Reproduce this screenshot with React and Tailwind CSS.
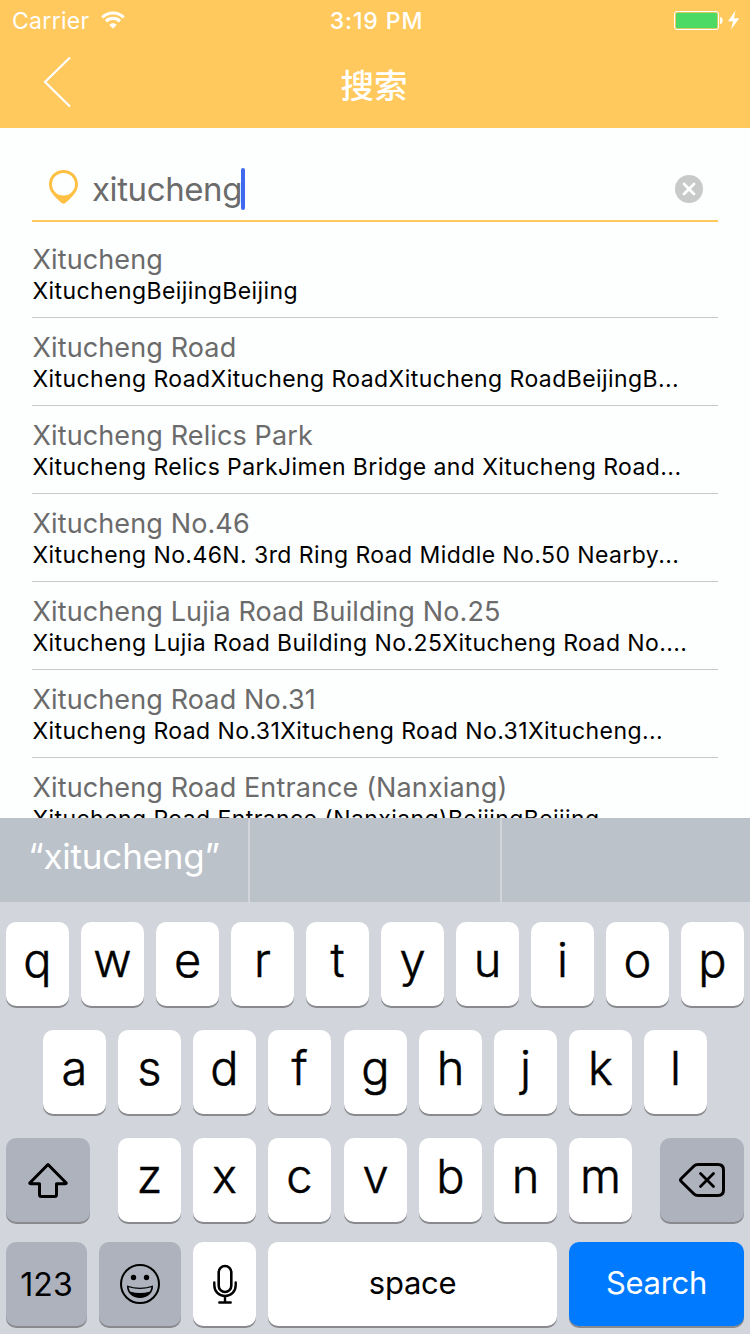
import React from "react";

const results = [
  { title: "Xitucheng", detail: "XituchengBeijingBeijing" },
  { title: "Xitucheng Road", detail: "Xitucheng RoadXitucheng RoadXitucheng RoadBeijingB..." },
  { title: "Xitucheng Relics Park", detail: "Xitucheng Relics ParkJimen Bridge and Xitucheng Road..." },
  { title: "Xitucheng No.46", detail: "Xitucheng No.46N. 3rd Ring Road Middle No.50 Nearby..." },
  { title: "Xitucheng Lujia Road Building No.25", detail: "Xitucheng Lujia Road Building No.25Xitucheng Road No...." },
  { title: "Xitucheng Road No.31", detail: "Xitucheng Road No.31Xitucheng Road No.31Xitucheng..." },
  { title: "Xitucheng Road Entrance (Nanxiang)", detail: "Xitucheng Road Entrance (Nanxiang)BeijingBeijing" },
];

const keyBase =
  "flex h-[84px] shrink-0 items-center justify-center rounded-[10px] shadow-[0_2px_0_#898a8d]";

function LetterKey({ children, className = "" }) {
  return (
    <button className={`${keyBase} w-[63px] bg-white pb-[9px] text-[47px] leading-none font-light [-webkit-text-stroke:0.5px_black] ${className}`}>
      {children}
    </button>
  );
}

function StatusBar() {
  return (
    <div className="grid h-10 grid-cols-3 items-center pr-[9px] pl-3 text-white">
      <div className="flex items-center">
        <span className="w-[78px] pt-[2px] text-[23px] leading-none tracking-[0.3px]">Carrier</span>
        <svg className="ml-[11px]" width="24" height="18" viewBox="0 0 25 18" fill="none" stroke="white" strokeWidth="3.3">
          <path d="M1.3 6.2C7.6.2 17.4.2 23.7 6.2" />
          <path d="M5.2 10.3C9.3 6.4 15.7 6.4 19.8 10.3" />
          <path d="M12.5 18 8.6 14C10.8 11.8 14.2 11.8 16.4 14Z" fill="white" stroke="none" />
        </svg>
      </div>
      <span className="pt-[2px] text-center text-[23px] leading-none font-[550] tracking-[0.9px]">3:19 PM</span>
      <svg className="justify-self-end" width="68" height="20" viewBox="0 0 68 20">
        <rect x="1.5" y="1.5" width="44" height="18" rx="2.5" fill="none" stroke="white" />
        <rect x="2.9" y="2.8" width="41.4" height="15.4" rx="1.5" fill="#4cd964" />
        <path d="M47 7C50.5 7 50.5 14 47 14Z" fill="white" />
        <path d="M62.5.5 55 11.3H60L58 19.5 66.3 8.2H61Z" fill="white" />
      </svg>
    </div>
  );
}

function Header() {
  return (
    <header className="h-32 shrink-0 bg-[#ffc95d]">
      <StatusBar />
      <div className="grid h-[84px] grid-cols-3 items-center text-white">
        <svg className="ml-[42px]" width="30" height="54" viewBox="0 0 30 54" fill="none" stroke="white" strokeWidth="2.2">
          <path d="M28 2.5 3 27 28 51.5" />
        </svg>
        <h1 className="pt-[3px] pr-[2px] text-center font-['Noto_Sans_CJK_SC',sans-serif] text-[33.5px] leading-none font-medium">搜索</h1>
      </div>
    </header>
  );
}

function SearchField() {
  return (
    <div className="mx-8 mt-[30px] flex h-16 shrink-0 items-center border-b-2 border-[#ffc95d] pr-[15px] pl-4">
      <svg className="mb-1" width="31" height="36" viewBox="0 0 31 36">
        <path fillRule="evenodd" fill="#ffc044" d="M15.5 1C23.6 1 30 7.2 30 15.1c0 6.4-3.7 10.7-8.5 15.2l-3.2 3c-1.8 1.8-3.8 1.8-5.6 0l-3.2-3C4.7 25.8 1 21.5 1 15.1 1 7.2 7.4 1 15.5 1Zm0 3.1C9 4.1 4 9.1 4 15.3 4 21.6 9 26.6 15.5 26.6S27 21.6 27 15.3C27 9.1 22 4.1 15.5 4.1Z" />
      </svg>
      <span className="ml-[13px] w-[149px] text-[33px] leading-none tracking-[-0.4px] text-[#6b6b6b]">xitucheng</span>
      <span className="h-[42px] w-1 rounded-sm bg-[#4169ef]" />
      <svg className="ml-auto" width="28" height="28" viewBox="0 0 28 28">
        <circle cx="14" cy="14" r="14" fill="#c8c9c9" />
        <path d="m9 9 10 10M19 9 9 19" stroke="white" strokeWidth="2.8" strokeLinecap="round" />
      </svg>
    </div>
  );
}

function Results() {
  return (
    <ul className="mx-8 mt-2 min-h-0 flex-1 overflow-hidden">
      {results.map((r) => (
        <li key={r.title} className="h-[88px] overflow-hidden border-b border-[#c8c7cc] pt-[13px] pl-[0.5px] whitespace-nowrap">
          <div className="text-[27px] leading-[34px] tracking-[0.12px] text-[#6b6b6b]">{r.title}</div>
          <div className="text-[23px] leading-7 tracking-[0.42px] text-black">{r.detail}</div>
        </li>
      ))}
    </ul>
  );
}

function Keyboard() {
  return (
    <section className="h-[516px] shrink-0 bg-[#d2d5dc] text-black">
      <div className="flex h-[84px] gap-[2px] text-white">
        <div className="flex w-[248px] items-center justify-center bg-[#bbc2ca] pb-2 text-[35px] tracking-[-0.2px]">
          “xitucheng”
        </div>
        <div className="w-[250px] bg-[#bbc2ca]" />
        <div className="flex-1 bg-[#bbc2ca]" />
      </div>
      <div className="flex flex-col gap-6 px-[6px] pt-5">
        <div className="flex gap-3">
          {"qwertyuiop".split("").map((k) => (
            <LetterKey key={k}>{k}</LetterKey>
          ))}
        </div>
        <div className="flex gap-3 pl-[37px]">
          {"asdfghjkl".split("").map((k) => (
            <LetterKey key={k} className={k === "g" ? "ml-px" : ""}>{k}</LetterKey>
          ))}
        </div>
        <div className="flex justify-between">
          <button className={`${keyBase} w-[84px] bg-[#adb2bd]`} aria-label="Shift">
            <svg width="42" height="38" viewBox="0 0 42 38" fill="none" stroke="black" strokeWidth="3" strokeLinejoin="round">
              <path d="M21 3.5 3 21.7Q2.2 22.7 3.5 22.7H12.5V33.5Q12.5 35.5 14.5 35.5H27.5Q29.5 35.5 29.5 33.5V22.7H38.5Q39.8 22.7 39 21.7Z" />
            </svg>
          </button>
          <div className="flex gap-3">
            {"zxcvbnm".split("").map((k) => (
              <LetterKey key={k} className={k === "v" ? "ml-px" : ""}>{k}</LetterKey>
            ))}
          </div>
          <button className={`${keyBase} w-[84px] bg-[#adb2bd]`} aria-label="Delete">
            <svg width="48" height="36" viewBox="0 0 48 36" fill="none" stroke="black" strokeWidth="3" strokeLinejoin="round">
              <path d="M20 2.5H40Q45.5 2.5 45.5 8V28Q45.5 33.5 40 33.5H20Q17.5 33.5 16 32L3.3 19.5Q1.8 18 3.3 16.5L16 4Q17.5 2.5 20 2.5Z" />
              <path d="m22.5 11.5 13 13m0-13-13 13" strokeWidth="2.8" strokeLinecap="round" />
            </svg>
          </button>
        </div>
      </div>
      <div className="mt-5 flex gap-3 px-[6px]">
        <button className={`${keyBase} w-[81px] bg-[#adb2bd] pt-px text-[32px]`}>123</button>
        <button className={`${keyBase} w-[82px] bg-[#adb2bd]`} aria-label="Emoji">
          <svg width="42" height="42" viewBox="0 0 42 42">
            <circle cx="21" cy="21" r="19" fill="none" stroke="black" strokeWidth="2" />
            <circle cx="14.5" cy="14.5" r="2.7" />
            <circle cx="27.5" cy="14.5" r="2.7" />
            <path fillRule="evenodd" d="M8 22.5Q21 27 34 22.5C34.500 30 28.500 35 21 35S7.500 30 8 22.500ZM9.600 24.300Q10 26.500 11 28.500Q21 31.500 31 28.500Q32 26.500 32.400 24.300Q21 27.600 9.600 24.300Z" />
          </svg>
        </button>
        <button className={`${keyBase} w-[63px] bg-white`} aria-label="Dictate">
          <svg width="26" height="42" viewBox="0 0 26 42" fill="none" stroke="black" strokeWidth="2.6" strokeLinecap="round">
            <rect x="6.7" y="3" width="12.6" height="26" rx="6.3" />
            <path d="M2.3 19.5V22C2.3 28.5 6.8 33 13 33S23.7 28.5 23.7 22V19.5M13 33V39M7.3 39.5H18.7" strokeWidth="2.4" />
          </svg>
        </button>
        <button className={`${keyBase} w-[289px] bg-white pb-[2px] text-[31px] tracking-[-0.3px]`}>space</button>
        <button className={`${keyBase} w-[175px] bg-[#007aff] pb-[2px] text-[31px] tracking-[-0.3px] text-white`}>Search</button>
      </div>
    </section>
  );
}

export default function App() {
  return (
    <main className="flex h-[1334px] w-[750px] flex-col overflow-hidden bg-[#fdfefe] font-['Inter',sans-serif]">
      <Header />
      <SearchField />
      <Results />
      <Keyboard />
    </main>
  );
}
